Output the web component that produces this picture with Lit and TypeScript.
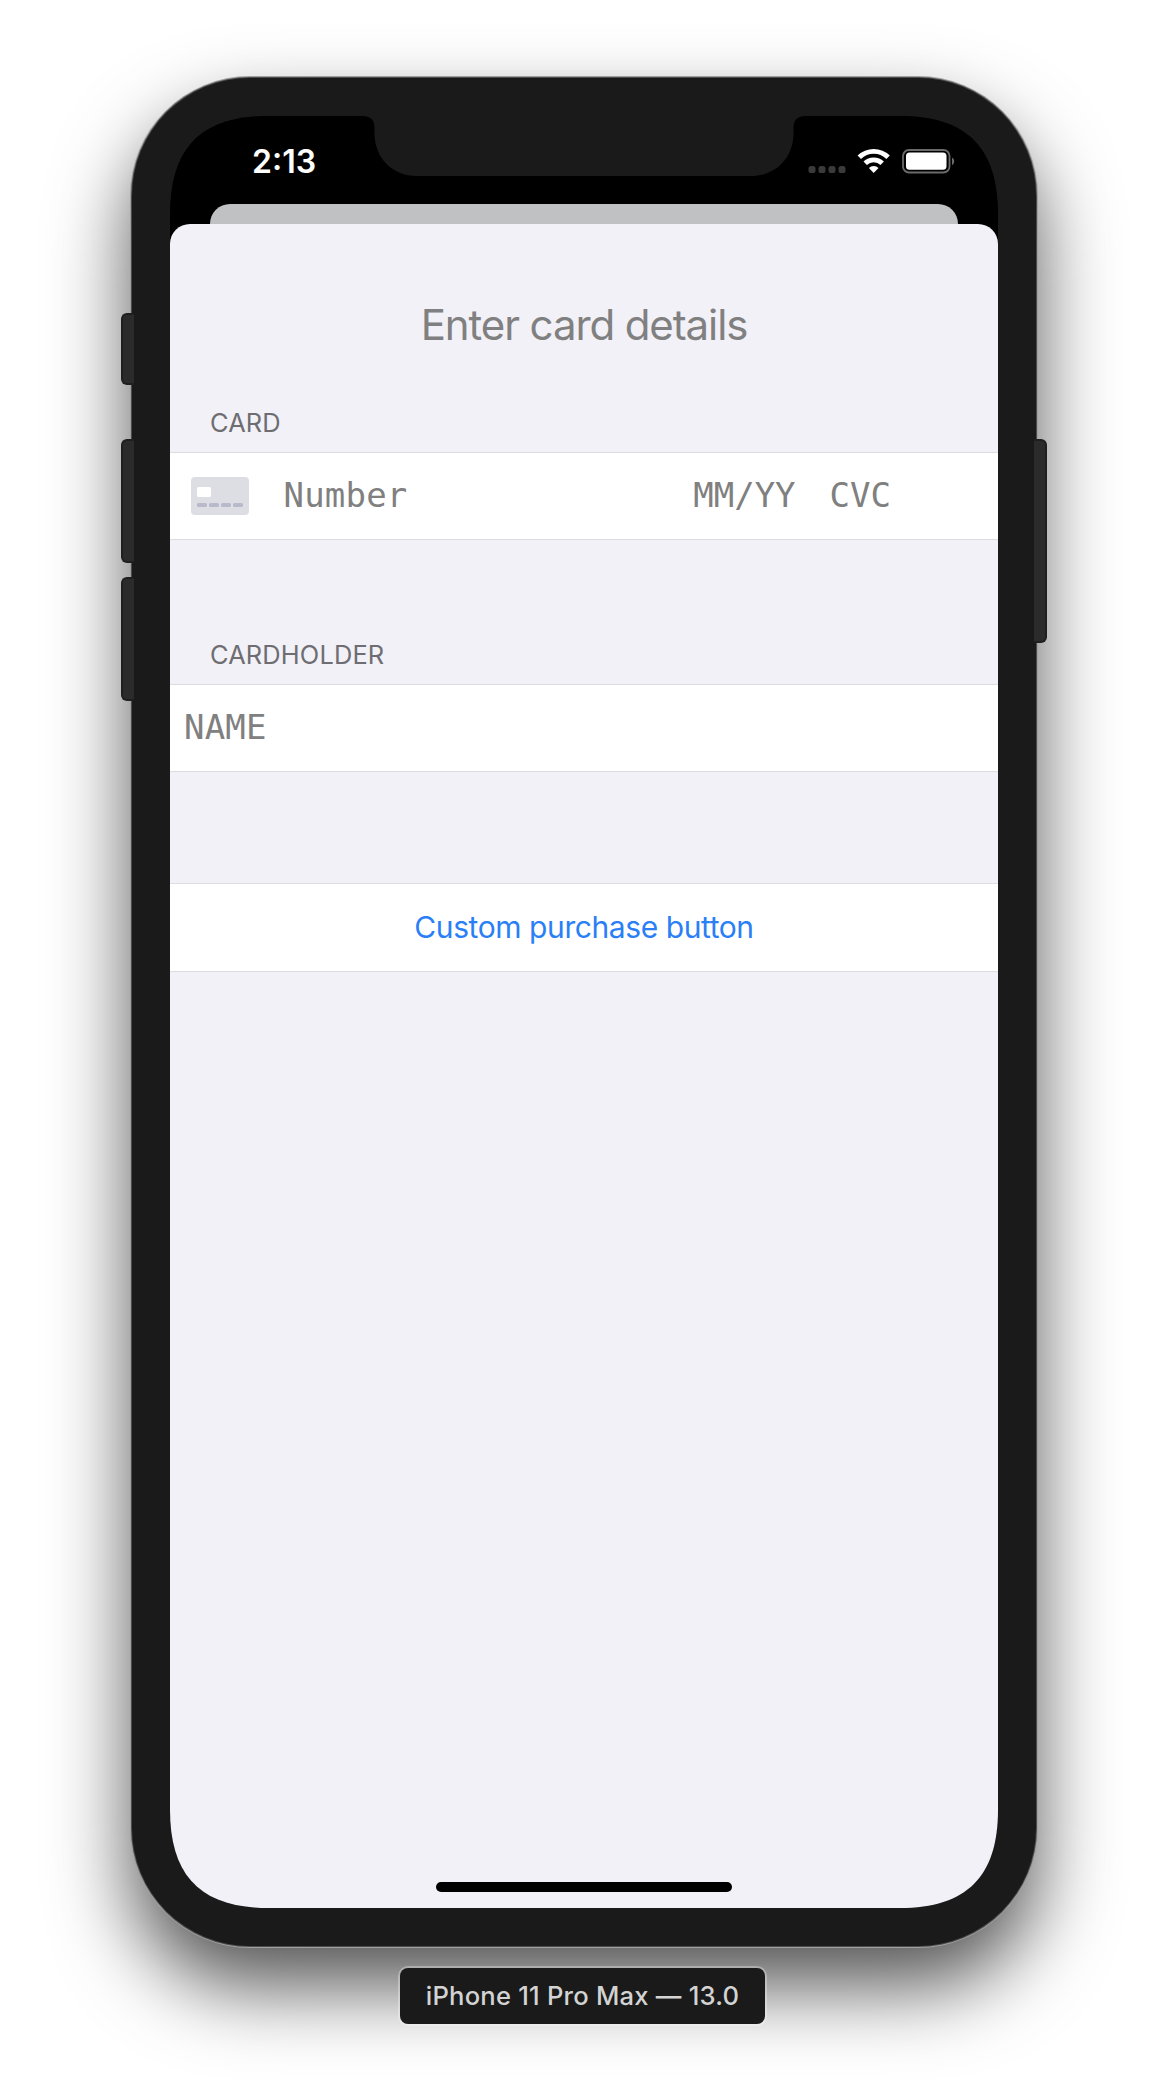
import { LitElement, html, css, svg } from "lit";
import { customElement } from "lit/decorators.js";

@customElement("status-bar")
class StatusBar extends LitElement {
  static styles = css`
    :host {
      display: flex;
      justify-content: space-between;
      height: 88px;
      box-sizing: border-box;
      padding: 25px 43px 0 82px;
      color: #fff;
      font-family: Inter, "Liberation Sans", sans-serif;
    }
    .time {
      padding-top: 1px;
      font-size: 32px;
      line-height: 40px;
      font-weight: 600;
    }
    .indicators {
      display: block;
      width: 150px;
      height: 40px;
    }
  `;

  render() {
    return html`
      <span class="time">2:13</span>
      <svg class="indicators" viewBox="805 141 150 40">
        ${[812, 822, 832, 842].map(
          (x) => svg`<rect x=${x - 3.5} y="166" width="7" height="7" rx="2.6" fill="#3a3a3a"></rect>`
        )}
        <g fill="none" stroke="#fff" stroke-width="4.9">
          <path d="M859.3 157.3a20.5 20.5 0 0 1 28.8 0"></path>
          <path d="M865.2 163.3a12.2 12.2 0 0 1 17 0"></path>
        </g>
        <path fill="#fff" d="M873.7 173l-4.8-5a6.8 6.8 0 0 1 9.6 0z"></path>
        <rect x="903" y="150" width="46.5" height="22.5" rx="6" fill="none" stroke="#6a6a6a" stroke-width="1.8"></rect>
        <rect x="906" y="152.5" width="40.5" height="17.3" rx="3.6" fill="#fff"></rect>
        <path fill="#6a6a6a" d="M952 157.5a4.4 4.4 0 0 1 0 7.6z"></path>
      </svg>
    `;
  }
}

@customElement("card-form")
class CardForm extends LitElement {
  static styles = css`
    :host {
      display: flex;
      flex-direction: column;
      color: #808080;
      font-family: Inter, "Liberation Sans", sans-serif;
    }
    .title {
      margin: 0;
      padding-top: 76px;
      text-align: center;
      font-size: 42px;
      line-height: 50px;
      font-weight: 400;
      letter-spacing: -1.1px;
    }
    .label {
      padding: 57px 0 13px 40px;
      font-size: 25.4px;
      line-height: 32px;
      letter-spacing: 0.15px;
      color: #6d6d72;
    }
    .label.second {
      padding-top: 99px;
    }
    .row {
      display: flex;
      align-items: center;
      box-sizing: border-box;
      height: 88px;
      padding-bottom: 2px;
      background: #fff;
      border-top: 1px solid #dcdcdf;
      border-bottom: 1px solid #dcdcdf;
      font-family: "DejaVu Sans Mono", monospace;
      font-size: 34px;
      line-height: 40px;
    }
    .card {
      padding: 0 107px 2px 21px;
    }
    .icon {
      width: 58px;
      height: 38px;
      margin: 2px 33px 0 0;
    }
    .number {
      flex: 1;
      padding-left: 1.5px;
      letter-spacing: 0.2px;
    }
    .expiry {
      margin-right: 34px;
    }
    .name {
      padding-left: 14px;
      letter-spacing: 0.2px;
    }
    .buy {
      height: 89px;
      margin-top: 111px;
      justify-content: center;
      font-family: Inter, "Liberation Sans", sans-serif;
      font-size: 30px;
      letter-spacing: -0.42px;
      color: #2b7ff6;
    }
  `;

  render() {
    return html`
      <h1 class="title">Enter card details</h1>
      <div class="label">CARD</div>
      <div class="row card">
        <svg class="icon" viewBox="0 0 58 38">
          <rect width="58" height="38" rx="4" fill="#dddee4"></rect>
          <rect x="6" y="10" width="14" height="10" rx="1.5" fill="#fff"></rect>
          ${[6, 18, 30, 42].map(
            (x) => svg`<rect x=${x} y="26" width="10" height="4" rx="1.6" fill="#b8bacb"></rect>`
          )}
        </svg>
        <span class="number">Number</span>
        <span class="expiry">MM/YY</span>
        <span>CVC</span>
      </div>
      <div class="label second">CARDHOLDER</div>
      <div class="row name">NAME</div>
      <div class="row buy">Custom purchase button</div>
    `;
  }
}

@customElement("app-root")
class AppRoot extends LitElement {
  static styles = css`
    :host {
      display: flex;
      flex-direction: column;
      align-items: center;
      box-sizing: border-box;
      width: 1168px;
      height: 2096px;
      padding-top: 78px;
      overflow: hidden;
      background: #fff;
      font-family: Inter, "Liberation Sans", sans-serif;
    }
    .device {
      position: relative;
      box-sizing: border-box;
      flex: none;
      width: 904px;
      height: 1868px;
      padding: 38px;
      border-radius: 118px;
      background: #1a1a1a;
      box-shadow:
        0 0 0 1px #4c4c4c,
        0 0 0 2px #a0a0a0,
        0 40px 80px rgba(0, 0, 0, 0.68);
    }
    .key {
      position: absolute;
      box-sizing: border-box;
      width: 13px;
      background: #2b2b2b;
      border: 2px solid #1f1f1f;
    }
    .left {
      left: -11px;
      border-right: 0;
      border-radius: 6px 0 0 6px;
    }
    .right {
      right: -11px;
      border-left: 0;
      border-radius: 0 6px 6px 0;
    }
    .mute {
      top: 235px;
      height: 72px;
    }
    .up {
      top: 361px;
      height: 124px;
    }
    .down {
      top: 499px;
      height: 124px;
    }
    .power {
      top: 361px;
      height: 204px;
    }
    .screen {
      display: flex;
      flex-direction: column;
      height: 1792px;
      background: #000;
    }
    .behind {
      height: 20px;
      margin: 0 40px;
      border-radius: 20px 20px 0 0;
      background: #bfc1c3;
    }
    .sheet {
      display: flex;
      flex-direction: column;
      justify-content: space-between;
      flex: 1;
      border-radius: 20px 20px 0 0;
      background: #f2f1f7;
    }
    .home {
      align-self: center;
      width: 296px;
      height: 10px;
      margin-bottom: 16px;
      border-radius: 5px;
      background: #000;
    }
    .notch {
      position: absolute;
      left: 228px;
      top: 37px;
      width: 448px;
      height: 61px;
    }
    .caption {
      display: flex;
      align-items: center;
      justify-content: center;
      position: relative;
      box-sizing: border-box;
      width: 365px;
      height: 56px;
      margin: 22px 3px 0 0;
      padding-bottom: 2px;
      border-radius: 8px;
      background: #1a1a1a;
      box-shadow: 0 0 0 2px rgba(255, 255, 255, 0.3);
      color: #d3d3d3;
      font-size: 25.6px;
      font-weight: 500;
      letter-spacing: 0.22px;
      white-space: nowrap;
    }
  `;

  /** Outline of a w×h rectangle; each corner starts e from the vertex, with handles c from it. */
  private smoothRect(w: number, h: number, e: number, c: number): string {
    return (
      `M${e} 0H${w - e}C${w - c} 0 ${w} ${c} ${w} ${e}` +
      `V${h - e}C${w} ${h - c} ${w - c} ${h} ${w - e} ${h}` +
      `H${e}C${c} ${h} 0 ${h - c} 0 ${h - e}` +
      `V${e}C0 ${c} ${c} 0 ${e} 0Z`
    );
  }

  render() {
    return html`
      <div class="device">
        <i class="key left mute"></i>
        <i class="key left up"></i>
        <i class="key left down"></i>
        <i class="key right power"></i>
        <div class="screen" style="clip-path: path('${this.smoothRect(828, 1792, 98, 31.5)}')">
          <status-bar></status-bar>
          <div class="behind"></div>
          <div class="sheet">
            <card-form></card-form>
            <div class="home"></div>
          </div>
        </div>
        <svg class="notch" viewBox="360 115 448 61">
          <path
            fill="#1a1a1a"
            d="M360 115V116H362C371 116 374.5 120 374.5 128V134C375 158 392 176 417 176H751C776 176 793 158 793.5 134V128C793.5 120 797 116 806 116H808V115Z"
          ></path>
        </svg>
      </div>
      <div class="caption">iPhone 11 Pro Max — 13.0</div>
    `;
  }
}
